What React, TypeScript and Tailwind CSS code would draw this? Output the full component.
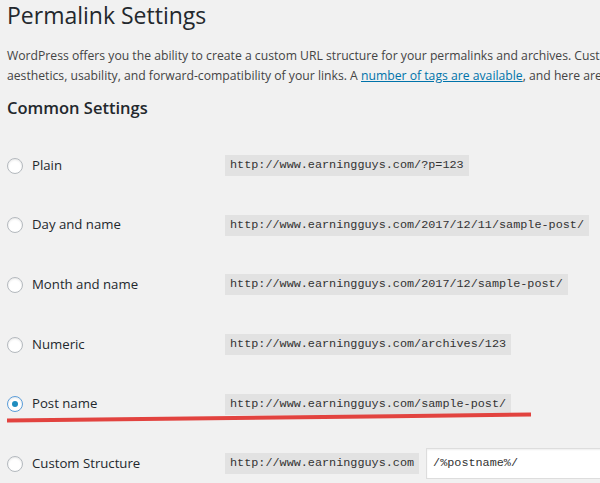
const options = [
  { label: "Plain", url: "http://www.earningguys.com/?p=123" },
  { label: "Day and name", url: "http://www.earningguys.com/2017/12/11/sample-post/" },
  { label: "Month and name", url: "http://www.earningguys.com/2017/12/sample-post/" },
  { label: "Numeric", url: "http://www.earningguys.com/archives/123" },
  { label: "Post name", url: "http://www.earningguys.com/sample-post/", checked: true },
];

const Radio = ({ checked }: { checked?: boolean }) => (
  <span
    className={
      "flex h-4 w-4 shrink-0 items-center justify-center rounded-full border bg-white shadow-[inset_0_1px_2px_rgba(0,0,0,0.1)] " +
      (checked ? "border-[#5b9dd9]" : "border-[#b4b9be]")
    }
  >
    {checked && <span className="h-1.5 w-1.5 rounded-full bg-[#1e8cbe]" />}
  </span>
);

const Code = ({ children }: { children: string }) => (
  <code className="bg-[#e2e2e2] px-[5px] py-[3px] font-['Liberation_Mono',monospace] text-[11.8px] leading-[15px] text-[#333]">
    {children}
  </code>
);

export default function App() {
  return (
    <div className="relative h-[483px] w-[600px] overflow-hidden bg-[#f1f1f1] font-['Open_Sans',sans-serif] text-[#23282d]">
      <div className="w-[900px] px-[7px]">
        <h1 className="pt-[1px] text-[23px] leading-[29px] font-normal">Permalink Settings</h1>
        <p className="mt-[16px] text-[12.2px] leading-[20px] text-[#444]">
          WordPress offers you the ability to create a custom URL structure for your permalinks and archives. Custom URL structures can improve the
          <br />
          aesthetics, usability, and forward-compatibility of your links. A{" "}
          <a className="text-[#0073aa] underline">number of tags are available</a>, and here are some examples to get you started.
        </p>
        <h2 className="mt-[11px] text-[16.5px] leading-[22px] font-semibold">Common Settings</h2>

        <div className="mt-[17px]">
          {options.map((o) => (
            <div key={o.label} className="flex h-[59.6px] items-center">
              <div className="flex w-[218px] items-center gap-[9px]">
                <Radio checked={o.checked} />
                <span className="text-[13.2px] font-medium">{o.label}</span>
              </div>
              <Code>{o.url}</Code>
            </div>
          ))}
          <div className="flex h-[59.6px] items-center">
            <div className="flex w-[218px] items-center gap-[9px]">
              <Radio />
              <span className="text-[13.2px] font-medium">Custom Structure</span>
            </div>
            <Code>http://www.earningguys.com</Code>
            <div className="ml-[7px] flex h-[31px] w-[260px] items-center border border-[#ddd] bg-white px-[6px] shadow-[inset_0_1px_2px_rgba(0,0,0,0.07)] font-['Liberation_Mono',monospace] text-[11.8px] text-[#333]">
              /%postname%/
            </div>
          </div>
        </div>
      </div>

      <svg className="pointer-events-none absolute left-0 top-0" width="600" height="483">
        <path d="M7 420.5 C 150 419, 350 417, 531 414.5" stroke="#e2433f" strokeWidth="4" fill="none" strokeLinecap="butt" />
      </svg>
    </div>
  );
}
